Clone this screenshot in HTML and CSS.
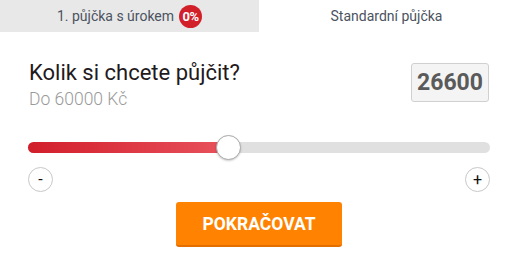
FILE: index.html
```html
<!DOCTYPE html>
<html lang="cs">
<head>
<meta charset="utf-8">
<link rel="stylesheet" href="styles.css">
</head>
<body>
<div class="tabs">
  <div class="tab tab-active">1. půjčka s úrokem <span class="badge">0%</span></div>
  <div class="tab">Standardní půjčka</div>
</div>
<div class="content">
  <div class="head-row">
    <div>
      <div class="title">Kolik si chcete půjčit?</div>
      <div class="subtitle">Do 60000 Kč</div>
    </div>
    <div class="amount">26600</div>
  </div>
  <div class="slider">
    <div class="fill" style="width: 200px"></div>
    <div class="thumb" style="left: 188px"></div>
  </div>
  <div class="steps">
    <div class="step">-</div>
    <div class="step">+</div>
  </div>
  <div class="actions">
    <button class="cta">POKRAČOVAT</button>
  </div>
</div>
</body>
</html>
```
FILE: styles.css
```css
html, body {
  margin: 0;
  padding: 0;
  background: #fff;
  font-family: Roboto, "Noto Sans", sans-serif;
}
.tabs {
  display: flex;
  height: 32px;
}
.tab {
  flex: 1;
  display: flex;
  align-items: center;
  justify-content: center;
  font-size: 14px;
  color: #4b5361;
}
.tab-active {
  flex: 0 0 259px;
  background: #e8e8e8;
}
.badge {
  display: inline-flex;
  align-items: center;
  justify-content: center;
  width: 23px;
  height: 23px;
  margin-left: 5px;
  border-radius: 50%;
  background: #d2202b;
  color: #fff;
  font-weight: 700;
  font-size: 13px;
  letter-spacing: -0.5px;
}
.content {
  width: 462px;
  margin-left: 28px;
}
.head-row {
  display: flex;
  justify-content: space-between;
  align-items: flex-start;
  padding-top: 28px;
}
.title {
  font-size: 22px;
  line-height: 26px;
  color: #1f1a1c;
  padding-left: 1px;
}
.subtitle {
  font-size: 17.5px;
  line-height: 20px;
  font-weight: 300;
  color: #9a9a9a;
  padding-left: 1px;
  margin-top: 3px;
}
.amount {
  margin-top: 3px;
  margin-right: 1px;
  width: 76px;
  height: 37px;
  border: 1px solid #d0d0d0;
  border-radius: 3px;
  background: #f4f4f4;
  display: flex;
  align-items: center;
  justify-content: center;
  font-size: 23px;
  font-weight: 700;
  color: #5a5a5a;
}
.slider {
  position: relative;
  margin-top: 33px;
  height: 11px;
  border-radius: 6px;
  background: #e0e0e0;
}
.fill {
  height: 100%;
  border-radius: 6px 0 0 6px;
  background: linear-gradient(90deg, #d21e2b, #e8525c);
}
.thumb {
  position: absolute;
  top: -7px;
  width: 23px;
  height: 23px;
  border-radius: 50%;
  background: #fff;
  border: 1px solid #a9a9a9;
  box-shadow: 0 1px 2px rgba(0,0,0,0.2);
}
.steps {
  display: flex;
  justify-content: space-between;
  margin-top: 14px;
}
.step {
  width: 23px;
  height: 23px;
  border: 1px solid #c8c8c8;
  border-radius: 50%;
  display: flex;
  align-items: center;
  justify-content: center;
  font-size: 16px;
  line-height: 1;
  color: #111;
}
.actions {
  display: flex;
  justify-content: center;
  margin-top: 10px;
}
.cta {
  width: 166px;
  height: 45px;
  border: 0;
  border-bottom: 2px solid #e26f00;
  border-radius: 3px;
  background: #ff8200;
  color: #fff;
  font-family: Roboto, sans-serif;
  font-weight: 700;
  font-size: 17.5px;
  padding: 0;
}
```
